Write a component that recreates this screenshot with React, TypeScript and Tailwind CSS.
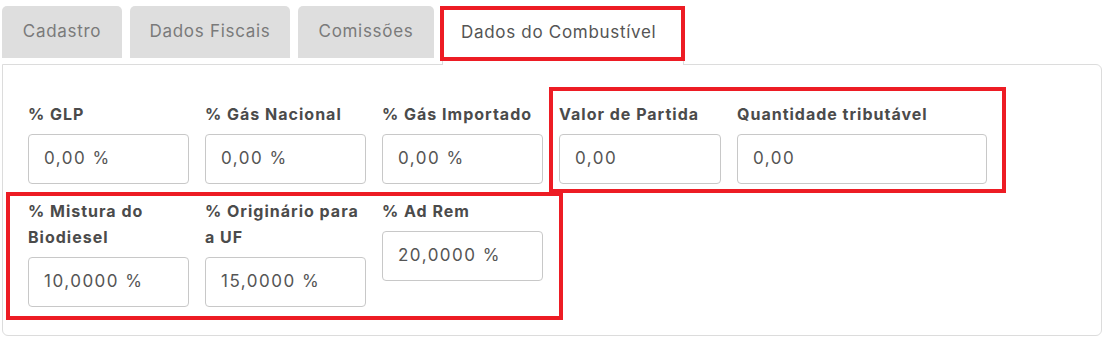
import React from "react"

type Field = {
  label: string
  value: string
  width: string
}

const rowOne: Field[] = [
  { label: "% GLP", value: "0,00 %", width: "w-[161px]" },
  { label: "% Gás Nacional", value: "0,00 %", width: "w-[161px]" },
  { label: "% Gás Importado", value: "0,00 %", width: "w-[161px]" },
  { label: "Valor de Partida", value: "0,00", width: "w-[162px]" },
  { label: "Quantidade tributável", value: "0,00", width: "w-[250px]" },
]

const rowTwo: Field[] = [
  { label: "% Mistura do Biodiesel", value: "10,0000 %", width: "w-[161px]" },
  { label: "% Originário para a UF", value: "15,0000 %", width: "w-[161px]" },
  { label: "% Ad Rem", value: "20,0000 %", width: "w-[161px]" },
]

const tabs = [
  { name: "Cadastro", width: "w-[120px]" },
  { name: "Dados Fiscais", width: "w-[160px]" },
  { name: "Comissões", width: "w-[136px]" },
]

function FieldBox({ label, value, width }: Field) {
  return (
    <div className={`flex flex-col ${width}`}>
      <label className="text-[16px] font-bold leading-[26px] tracking-[1px] text-[#4b4b4b]">{label}</label>
      <div className="mt-[7px] flex h-[50px] items-center rounded-[4px] border border-[#c8c8c8] bg-white px-[15px] text-[17px] tracking-[1.5px] text-[#555]">
        {value}
      </div>
    </div>
  )
}

export default function App() {
  return (
    <div className="relative h-[349px] w-[1108px] bg-white pl-[2px] pt-[6px]" style={{ fontFamily: "Inter, 'Noto Sans', sans-serif" }}>
      <div className="flex items-start gap-[8px]">
        {tabs.map((t) => (
          <div
            key={t.name}
            className={`flex h-[52px] items-center justify-center rounded-t-[5px] bg-[#dedede] text-[17px] tracking-[0.7px] text-[#7a7a7a] ${t.width}`}
          >
            {t.name}
          </div>
        ))}
        <div className="relative z-10 flex h-[59px] w-[242px] rounded-t-[5px] border-x border-t border-[#dcdcdc] bg-white pl-[18px] pt-[13px] text-[17px] tracking-[0.7px] text-[#555]">
          Dados do Combustível
        </div>
      </div>

      <div className="-mt-[1px] h-[272px] w-[1100px] rounded-b-[6px] rounded-tr-[6px] border border-[#dcdcdc] px-[25px] pt-[36px]">
        <div className="flex gap-[16px]">
          {rowOne.map((f) => (
            <FieldBox key={f.label} {...f} />
          ))}
        </div>
        <div className="mt-[14px] flex items-start gap-[16px]">
          {rowTwo.map((f) => (
            <FieldBox key={f.label} {...f} />
          ))}
        </div>
      </div>

      {/* highlight annotations */}
      <div className="pointer-events-none absolute left-[440px] top-[6px] z-20 h-[55px] w-[245px] border-[4px] border-[#ed1c24]" />
      <div className="pointer-events-none absolute left-[549px] top-[87px] z-20 h-[106px] w-[457px] border-[4px] border-[#ed1c24]" />
      <div className="pointer-events-none absolute left-[6px] top-[192px] z-20 h-[128px] w-[557px] border-[4px] border-[#ed1c24]" />
    </div>
  )
}
